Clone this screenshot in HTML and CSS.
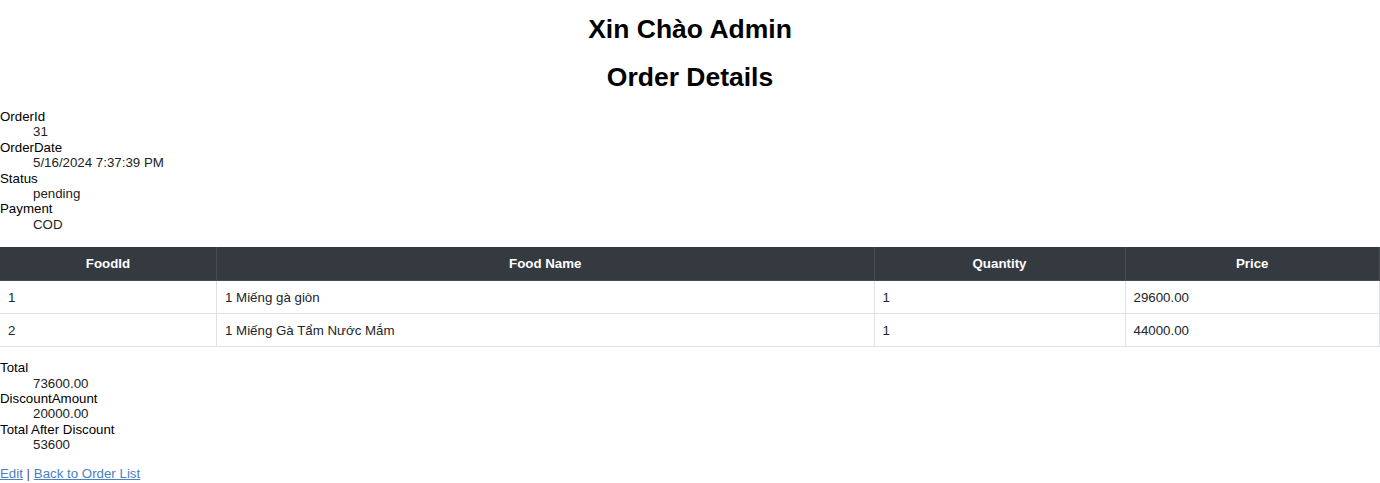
FILE: index.html
```html
<!DOCTYPE html>
<html>
<head>
<meta charset="utf-8">
<link rel="stylesheet" href="styles.css">
</head>
<body>
<h1 class="title">Xin Chào Admin</h1>
<h1 class="title">Order Details</h1>
<dl class="info">
  <dt>OrderId</dt><dd>31</dd>
  <dt>OrderDate</dt><dd>5/16/2024 7:37:39 PM</dd>
  <dt>Status</dt><dd>pending</dd>
  <dt>Payment</dt><dd>COD</dd>
</dl>
<table class="items">
  <thead>
    <tr><th class="c1">FoodId</th><th class="c2">Food Name</th><th class="c3">Quantity</th><th>Price</th></tr>
  </thead>
  <tbody>
    <tr><td>1</td><td>1 Miếng gà giòn</td><td>1</td><td>29600.00</td></tr>
    <tr><td>2</td><td>1 Miếng Gà Tẩm Nước Mắm</td><td>1</td><td>44000.00</td></tr>
  </tbody>
</table>
<dl class="info totals">
  <dt>Total</dt><dd>73600.00</dd>
  <dt>DiscountAmount</dt><dd>20000.00</dd>
  <dt>Total After Discount</dt><dd>53600</dd>
</dl>
<p class="links"><a href="#">Edit</a> | <a href="#">Back to Order List</a></p>
</body>
</html>
```
FILE: styles.css
```css
html, body {
  margin: 0;
  padding: 0;
  background: #fff;
}
body {
  font-family: "Liberation Sans", Arial, sans-serif;
  font-size: 13.3px;
  line-height: 15.4px;
  color: #212529;
}
.title {
  font-size: 26.5px;
  line-height: 30px;
  font-weight: bold;
  text-align: center;
  color: #000;
  margin: 14px 0 17.5px;
}
.info {
  margin: 0;
  color: #000;
}
.info dt {
  font-weight: normal;
}
.info dd {
  margin: 0 0 0 33px;
  color: #222;
}
.items {
  width: 1380px;
  border-collapse: collapse;
  margin-top: 15px;
  margin-bottom: 13px;
}
.items th {
  background: #343a40;
  color: #fff;
  font-weight: bold;
  text-align: center;
  height: 33px;
  padding: 0 9px;
  border: 1px solid #454d55;
  border-top: none;
}
.items td {
  height: 32px;
  padding: 0 8px;
  border: 1px solid #dee2e6;
  color: #212529;
}
.items tr td:first-child, .items tr th:first-child { border-left: none; }
.items .c1 { width: 198px; }
.items .c2 { width: 638.5px; }
.items .c3 { width: 232px; }
.links {
  margin: 13px 0 0;
  color: #555;
}
.links a {
  color: #4a7fc1;
  text-decoration: underline;
}
```
